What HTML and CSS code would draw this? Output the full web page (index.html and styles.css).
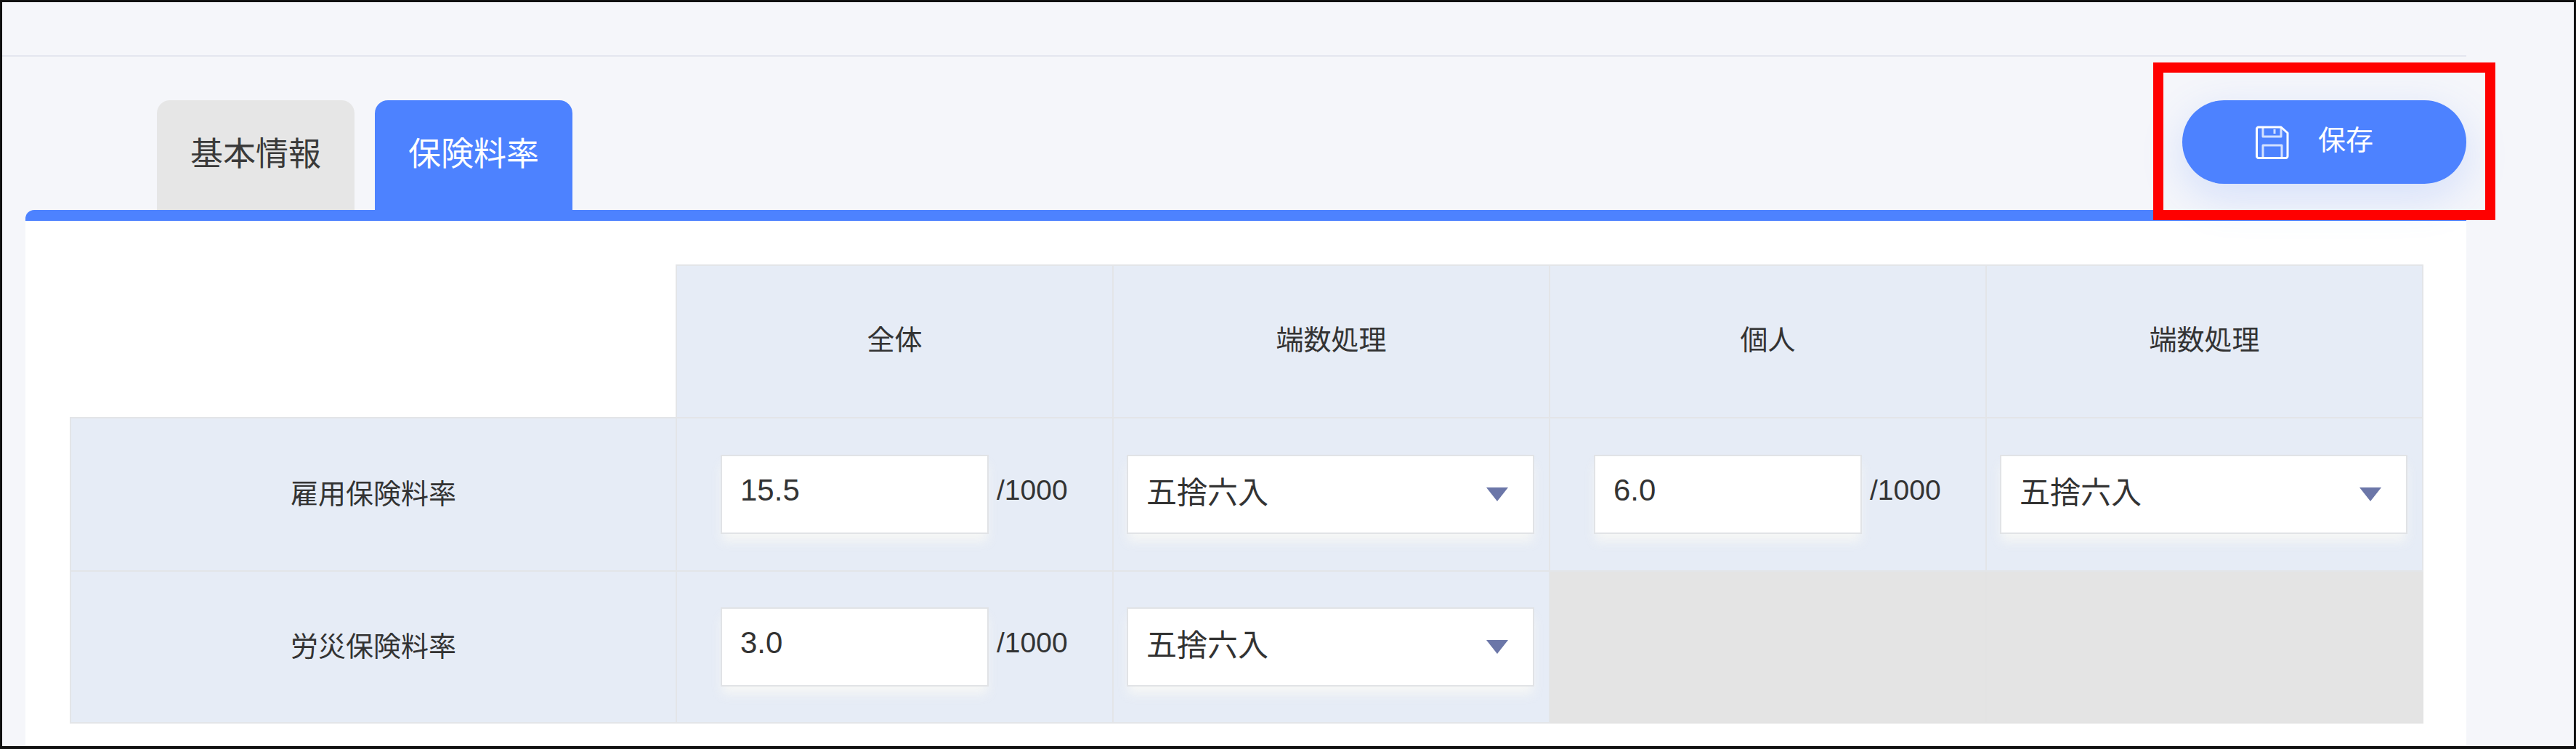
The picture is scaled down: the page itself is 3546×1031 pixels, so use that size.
FILE: index.html
```html
<!DOCTYPE html>
<html lang="ja">
<head>
<meta charset="utf-8">
<title>保険料率</title>
<link rel="stylesheet" href="styles.css">
</head>
<body>
<div class="frame">
  <div class="main">
    <div class="topbar"></div>
    <div class="toolbar">
      <div class="tabs">
        <div class="tab">基本情報</div>
        <div class="tab tab-active">保険料率</div>
      </div>
      <button class="save" type="button">
        <svg class="save-icon" viewBox="0 0 46 46" fill="none" stroke="#fff" stroke-width="3" stroke-linejoin="round">
          <path d="M4 2 H35 L44 10 V42 a2.500 2.500 0 0 1 -2.500 2.500 H4 a2.500 2.500 0 0 1 -2.500 -2.500 V4.500 A2.500 2.500 0 0 1 4 2 Z"/>
          <path d="M10 2 V15 H35 V2" stroke-opacity=".75"/>
          <path d="M26 5 V11" stroke-opacity=".75"/>
          <path d="M10 44 V27 H36 V44" stroke-opacity=".75"/>
        </svg>
        <span>保存</span>
      </button>
    </div>
    <div class="panel">
      <table class="rates">
        <colgroup>
          <col class="col-label">
          <col class="col-a">
          <col class="col-b">
          <col class="col-a">
          <col class="col-b">
        </colgroup>
        <tr class="row-head">
          <th class="blank"></th>
          <th>全体</th>
          <th>端数処理</th>
          <th>個人</th>
          <th>端数処理</th>
        </tr>
        <tr class="row-one">
          <th>雇用保険料率</th>
          <td><div class="rate"><div class="field">15.5</div><span class="unit">/1000</span></div></td>
          <td><div class="pick"><div class="field select"><span>五捨六入</span><i class="arrow"></i></div></div></td>
          <td><div class="rate"><div class="field">6.0</div><span class="unit">/1000</span></div></td>
          <td><div class="pick"><div class="field select"><span>五捨六入</span><i class="arrow"></i></div></div></td>
        </tr>
        <tr class="row-two">
          <th>労災保険料率</th>
          <td><div class="rate"><div class="field">3.0</div><span class="unit">/1000</span></div></td>
          <td><div class="pick"><div class="field select"><span>五捨六入</span><i class="arrow"></i></div></div></td>
          <td class="off"></td>
          <td class="off"></td>
        </tr>
      </table>
    </div>
  </div>
  <div class="callout"></div>
</div>
</body>
</html>
```

FILE: styles.css
```css
* { box-sizing: border-box; }

html, body {
  margin: 0;
  height: 100%;
}

body {
  font-family: "Liberation Sans", "Noto Sans CJK JP", sans-serif;
  color: #333;
}

.frame {
  position: relative;
  width: 3546px;
  height: 1031px;
  border: 3px solid #111;
  border-bottom-width: 4px;
  background: #f5f6fa;
  overflow: hidden;
}

.main {
  width: 3392px;
  height: 100%;
  display: flex;
  flex-direction: column;
}

.topbar {
  height: 75px;
  flex: none;
  border-bottom: 2px solid #e4e6ef;
}

.toolbar {
  display: flex;
  align-items: flex-start;
  justify-content: space-between;
  flex: none;
  padding-top: 60px;
  padding-left: 213px;
}

.tabs {
  display: flex;
  gap: 28px;
}

.tab {
  width: 272px;
  height: 151px;
  padding-bottom: 11px;
  display: flex;
  align-items: center;
  justify-content: center;
  border-radius: 18px 18px 0 0;
  background: #e6e6e6;
  font-size: 45px;
  color: #3a3a3a;
}

.tab-active {
  background: #4d82ff;
  color: #fff;
}

.save {
  position: relative;
  z-index: 1;
  width: 391px;
  height: 115px;
  padding: 0 0 0 101px;
  display: flex;
  align-items: center;
  gap: 40px;
  border: 0;
  border-radius: 58px;
  background: #4d82ff;
  box-shadow: 0 18px 60px rgba(77, 130, 255, .2);
  color: #fff;
  font-family: inherit;
  font-size: 38px;
}

.save span {
  position: relative;
  top: -6px;
}

.save-icon {
  width: 46px;
  height: 46px;
  flex: none;
}

.panel {
  flex: 1;
  margin-left: 32px;
  padding: 60px 60px 0 61px;
  border-top: 15px solid #4d82ff;
  border-top-left-radius: 12px;
  background: #fff;
}

.rates {
  width: 3238px;
  table-layout: fixed;
  border-collapse: collapse;
  background: #e6ecf6;
  font-size: 38px;
}

.col-label { width: 834px; }
.col-a { width: 601px; }
.col-b { width: 601px; }

.rates th,
.rates td {
  padding: 0;
  border: 2px solid #e3e5e8;
}

.rates th {
  padding-bottom: 8px;
  font-weight: 400;
  color: #333;
}

.row-head th {
  padding-bottom: 12px;
}

.rates th.blank {
  background: #fff;
  border-top-color: #fff;
  border-left-color: #fff;
}

.rates .off {
  background: #e4e4e4;
  border-color: #e3e3e3;
}

.row-head { height: 210px; }
.row-one { height: 211px; }
.row-two { height: 209px; }

.rate {
  display: flex;
  align-items: center;
  gap: 11px;
  padding-left: 60px;
}

.pick {
  padding-left: 18px;
}

.field {
  width: 369px;
  height: 109px;
  padding: 0 25px 12px;
  display: flex;
  align-items: center;
  border: 2px solid #e1e3e6;
  background: #fff;
  box-shadow: 0 12px 14px -2px rgba(249, 249, 246, .85);
  font-size: 42px;
  color: #333;
}

.select {
  width: 561px;
  justify-content: space-between;
  padding-right: 34px;
}

.arrow {
  width: 0;
  height: 0;
  margin-top: 12px;
  border-top: 19px solid #6b76a8;
  border-left: 15px solid transparent;
  border-right: 15px solid transparent;
}

.unit {
  margin-bottom: 12px;
  font-size: 39px;
  color: #333;
}

.callout {
  position: absolute;
  left: 2961px;
  top: 83px;
  width: 471px;
  height: 217px;
  border: 14px solid #f00;
  z-index: 2;
}
```
